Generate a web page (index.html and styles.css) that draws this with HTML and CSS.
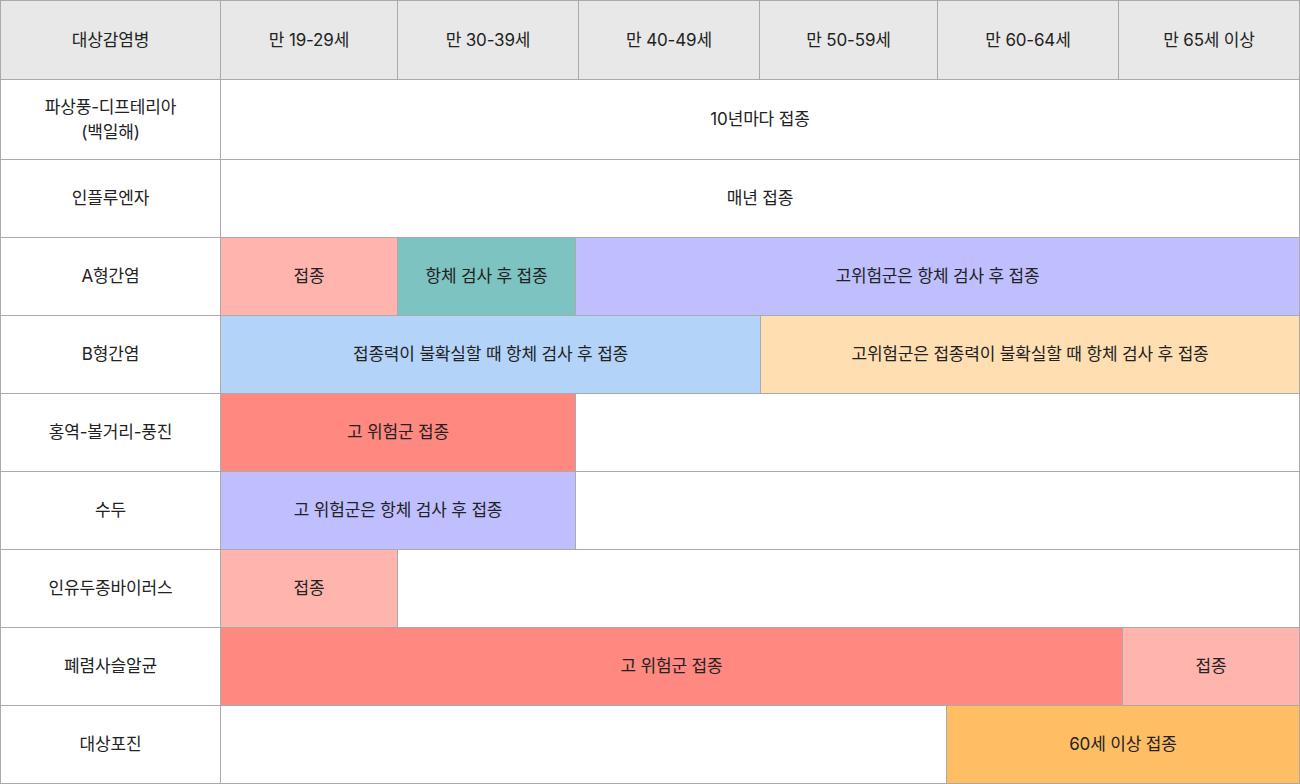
FILE: index.html
```html
<!DOCTYPE html>
<html lang="ko">
<head>
<meta charset="utf-8">
<link rel="stylesheet" href="styles.css">
</head>
<body>
<div class="table">
  <div class="row head">
    <div class="cell c-name">대상감염병</div>
    <div class="cell w177">만 19-29세</div>
    <div class="cell w181">만 30-39세</div>
    <div class="cell w181">만 40-49세</div>
    <div class="cell w178">만 50-59세</div>
    <div class="cell w181">만 60-64세</div>
    <div class="cell w181">만 65세 이상</div>
  </div>
  <div class="row tall">
    <div class="cell c-name">파상풍-디프테리아<br>(백일해)</div>
    <div class="cell grow">10년마다 접종</div>
  </div>
  <div class="row">
    <div class="cell c-name">인플루엔자</div>
    <div class="cell grow">매년 접종</div>
  </div>
  <div class="row">
    <div class="cell c-name">A형간염</div>
    <div class="cell w177 pink">접종</div>
    <div class="cell w178 teal">항체 검사 후 접종</div>
    <div class="cell grow lav">고위험군은 항체 검사 후 접종</div>
  </div>
  <div class="row">
    <div class="cell c-name">B형간염</div>
    <div class="cell w540 blue">접종력이 불확실할 때 항체 검사 후 접종</div>
    <div class="cell grow peach">고위험군은 접종력이 불확실할 때 항체 검사 후 접종</div>
  </div>
  <div class="row">
    <div class="cell c-name">홍역-볼거리-풍진</div>
    <div class="cell w355 red">고 위험군 접종</div>
    <div class="cell grow"></div>
  </div>
  <div class="row">
    <div class="cell c-name">수두</div>
    <div class="cell w355 lav">고 위험군은 항체 검사 후 접종</div>
    <div class="cell grow"></div>
  </div>
  <div class="row">
    <div class="cell c-name">인유두종바이러스</div>
    <div class="cell w177 pink">접종</div>
    <div class="cell grow"></div>
  </div>
  <div class="row">
    <div class="cell c-name">폐렴사슬알균</div>
    <div class="cell w902 red">고 위험군 접종</div>
    <div class="cell grow pink">접종</div>
  </div>
  <div class="row">
    <div class="cell c-name">대상포진</div>
    <div class="cell w726"></div>
    <div class="cell grow orange">60세 이상 접종</div>
  </div>
</div>
</body>
</html>
```

FILE: styles.css
```css
* { box-sizing: border-box; }
html, body { margin: 0; padding: 0; background: #fff; }
body {
  font-family: Inter, "Noto Sans CJK KR", sans-serif;
  font-size: 17px;
  color: #222;
  letter-spacing: -0.01em;
}
.table {
  width: 1300px;
  border-left: 1px solid #aaa;
  border-top: 1px solid #aaa;
}
.row {
  display: flex;
  height: 78px;
}
.row.head { height: 79px; background: #e8e8e8; }
.row.tall { height: 80px; }
.cell {
  display: flex;
  align-items: center;
  justify-content: center;
  text-align: center;
  line-height: 25px;
  border-right: 1px solid #aaa;
  border-bottom: 1px solid #aaa;
  flex: none;
}
.c-name { width: 220px; background: #fff; }
.head .c-name { background: #e8e8e8; }
.w177 { width: 177px; }
.w178 { width: 178px; }
.w181 { width: 181px; }
.w355 { width: 355px; }
.w540 { width: 540px; }
.w726 { width: 726px; }
.w902 { width: 902px; }
.grow { flex: 1 1 auto; }
.pink { background: #ffb4ae; }
.teal { background: #7dc3c1; }
.lav { background: #bfbfff; }
.blue { background: #b3d3f8; }
.peach { background: #ffdeb2; }
.red { background: #ff8880; }
.orange { background: #ffbe64; }
```
